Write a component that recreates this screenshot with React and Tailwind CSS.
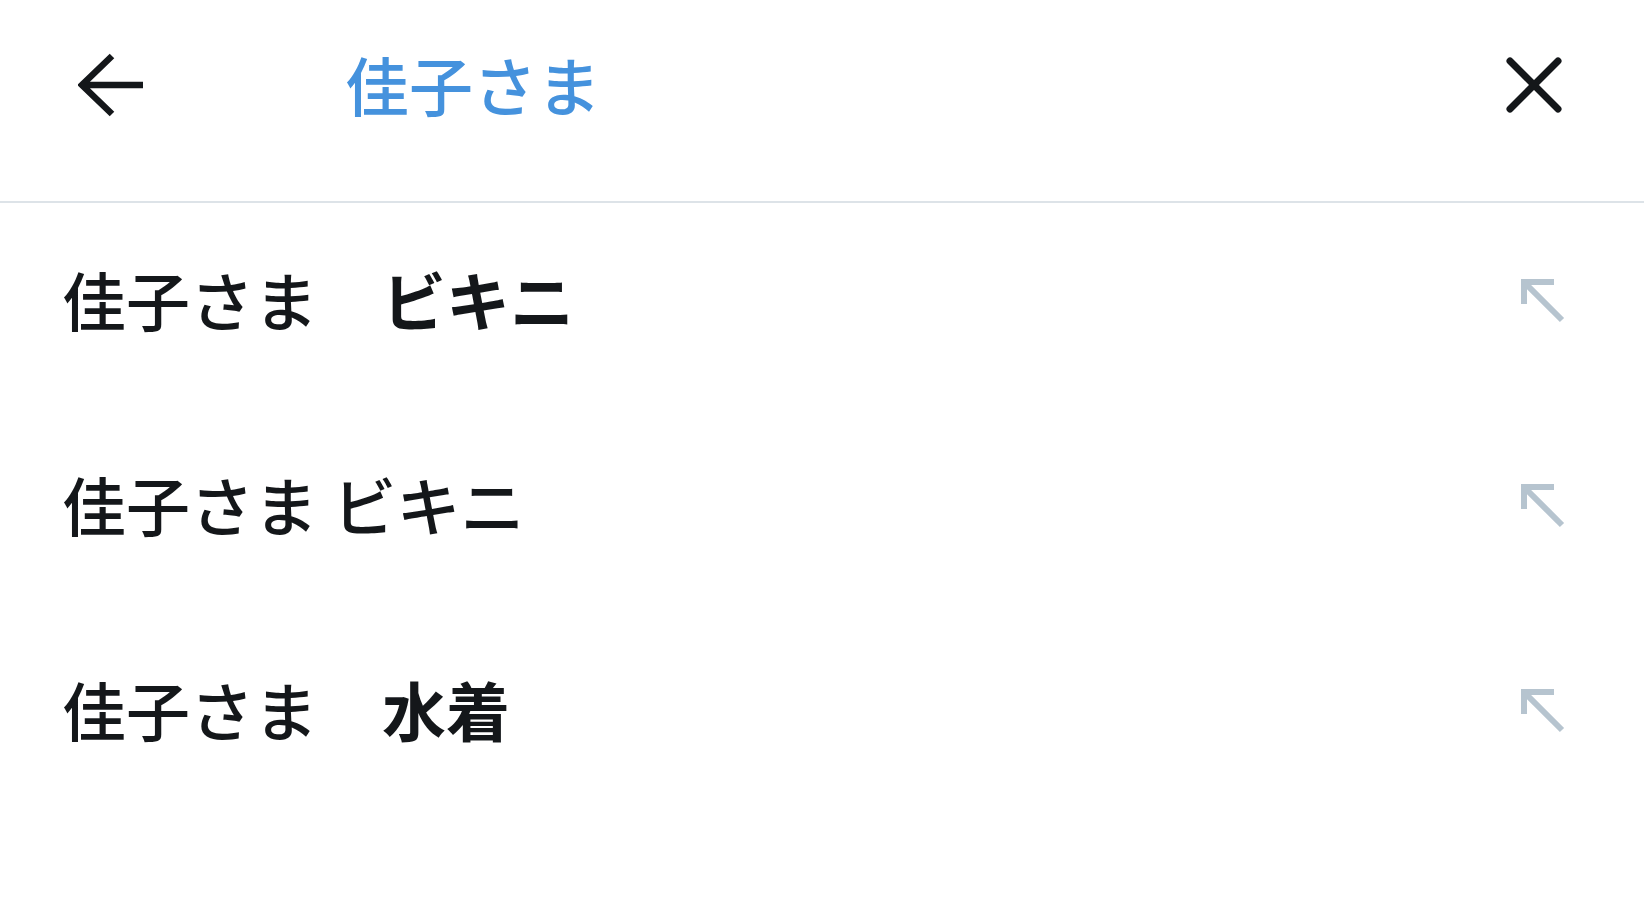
import React from 'react';

const suggestions = [
  { base: '佳子さま', sep: '　', rest: 'ビキニ', bold: true },
  { base: '佳子さま', sep: ' ', rest: 'ビキニ', bold: false },
  { base: '佳子さま', sep: '　', rest: '水着', bold: true },
];

const BackArrow = () => (
  <svg width="66" height="64" viewBox="0 0 66 64" fill="none">
    <path d="M34 3 L4 32 L34 61 M4 32 H65" stroke="#14171a" strokeWidth="6.5" />
  </svg>
);

const CloseIcon = () => (
  <svg width="58" height="58" viewBox="0 0 58 58" fill="none">
    <path d="M5 5 L53 53 M53 5 L5 53" stroke="#14171a" strokeWidth="7" strokeLinecap="round" />
  </svg>
);

// arrow that fills the query back into the search box
const FillArrow = () => (
  <svg width="46" height="46" viewBox="0 0 46 46" fill="none">
    <path d="M5 27 V5 H35" stroke="#b6c4cf" strokeWidth="6" />
    <path d="M5 5 L43 43" stroke="#b6c4cf" strokeWidth="6" />
  </svg>
);

export default function App() {
  return (
    <div
      className="w-[1644px] h-[911px] bg-white overflow-hidden text-[#14171a]"
      style={{ fontFamily: '"Noto Sans CJK JP", "Noto Sans", sans-serif' }}
    >
      <div className="h-[203px] border-b-2 border-[#dde3e8]">
        <div className="h-[170px] flex items-center pl-[78px] pr-[81px]">
          <BackArrow />
          <div className="ml-[201px] mb-[5px] text-[64px] leading-none font-medium text-[#4592dd]">佳子さま</div>
          <div className="ml-auto">
            <CloseIcon />
          </div>
        </div>
      </div>

      <ul>
        {suggestions.map((s, i) => (
          <li key={i} className="h-[205px] flex items-center justify-between pl-[62px] pr-[79px] pb-[16px]">
            <span className="text-[64px] leading-none font-medium whitespace-pre">
              {s.base}
              {s.sep}
              <span className={s.bold ? 'font-bold' : ''}>{s.rest}</span>
            </span>
            <div className="mt-[4px]">
              <FillArrow />
            </div>
          </li>
        ))}
      </ul>
    </div>
  );
}
